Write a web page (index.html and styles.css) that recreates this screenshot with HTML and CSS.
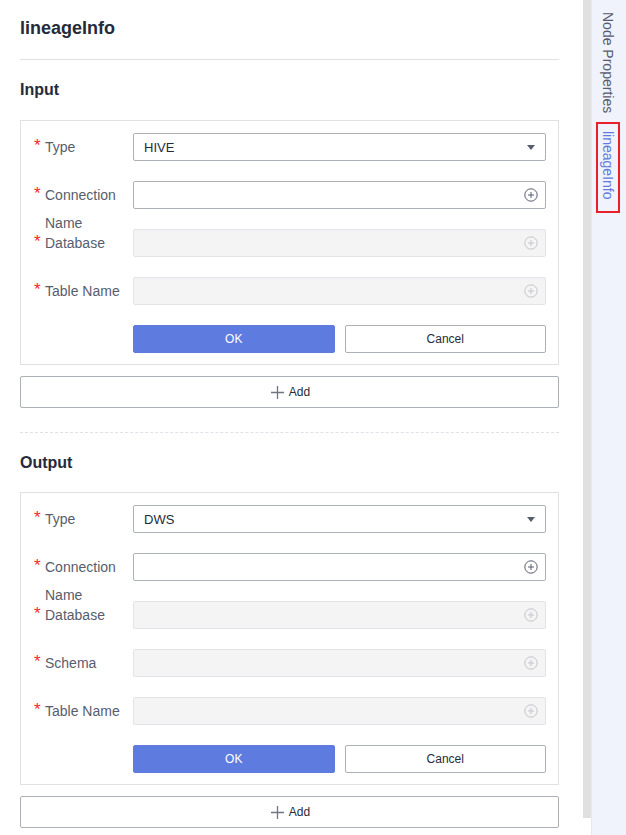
FILE: index.html
```html
<!DOCTYPE html>
<html>
<head>
<meta charset="utf-8">
<link rel="stylesheet" href="styles.css">
</head>
<body>
<div class="layout">
  <main class="content">
    <h1 class="title">lineageInfo</h1>
    <hr class="rule">

    <section class="section">
      <h2 class="section-title">Input</h2>
      <div class="card">
        <div class="row">
          <div class="label"><span class="req">*</span><span class="label-text">Type</span></div>
          <div class="field select"><span class="value">HIVE</span>
            <svg class="caret" width="8" height="5" viewBox="0 0 8 5"><path d="M0 0H8L4 5Z" fill="#575d6c"/></svg>
          </div>
        </div>
        <div class="row">
          <div class="label"><span class="req">*</span><span class="label-text">Connection Name</span></div>
          <div class="field"><svg class="plus" width="14" height="14" viewBox="0 0 14 14"><circle cx="7" cy="7" r="6.2" fill="none" stroke="#575d6c" stroke-width="1"/><path d="M7 4V10M4 7H10" stroke="#575d6c" stroke-width="1"/></svg></div>
        </div>
        <div class="row">
          <div class="label"><span class="req">*</span><span class="label-text">Database</span></div>
          <div class="field disabled"><svg class="plus" width="14" height="14" viewBox="0 0 14 14"><circle cx="7" cy="7" r="6.2" fill="none" stroke="#c2c5cc" stroke-width="1"/><path d="M7 4V10M4 7H10" stroke="#c2c5cc" stroke-width="1"/></svg></div>
        </div>
        <div class="row">
          <div class="label"><span class="req">*</span><span class="label-text">Table Name</span></div>
          <div class="field disabled"><svg class="plus" width="14" height="14" viewBox="0 0 14 14"><circle cx="7" cy="7" r="6.2" fill="none" stroke="#c2c5cc" stroke-width="1"/><path d="M7 4V10M4 7H10" stroke="#c2c5cc" stroke-width="1"/></svg></div>
        </div>
        <div class="actions">
          <button class="btn primary">OK</button>
          <button class="btn">Cancel</button>
        </div>
      </div>
      <button class="add"><svg width="13" height="13" viewBox="0 0 13 13"><path d="M6.5 0V13M0 6.5H13" stroke="#71757f" stroke-width="1.3"/></svg><span>Add</span></button>
    </section>

    <hr class="dashed">

    <section class="section out">
      <h2 class="section-title">Output</h2>
      <div class="card">
        <div class="row">
          <div class="label"><span class="req">*</span><span class="label-text">Type</span></div>
          <div class="field select"><span class="value">DWS</span>
            <svg class="caret" width="8" height="5" viewBox="0 0 8 5"><path d="M0 0H8L4 5Z" fill="#575d6c"/></svg>
          </div>
        </div>
        <div class="row">
          <div class="label"><span class="req">*</span><span class="label-text">Connection Name</span></div>
          <div class="field"><svg class="plus" width="14" height="14" viewBox="0 0 14 14"><circle cx="7" cy="7" r="6.2" fill="none" stroke="#575d6c" stroke-width="1"/><path d="M7 4V10M4 7H10" stroke="#575d6c" stroke-width="1"/></svg></div>
        </div>
        <div class="row">
          <div class="label"><span class="req">*</span><span class="label-text">Database</span></div>
          <div class="field disabled"><svg class="plus" width="14" height="14" viewBox="0 0 14 14"><circle cx="7" cy="7" r="6.2" fill="none" stroke="#c2c5cc" stroke-width="1"/><path d="M7 4V10M4 7H10" stroke="#c2c5cc" stroke-width="1"/></svg></div>
        </div>
        <div class="row">
          <div class="label"><span class="req">*</span><span class="label-text">Schema</span></div>
          <div class="field disabled"><svg class="plus" width="14" height="14" viewBox="0 0 14 14"><circle cx="7" cy="7" r="6.2" fill="none" stroke="#c2c5cc" stroke-width="1"/><path d="M7 4V10M4 7H10" stroke="#c2c5cc" stroke-width="1"/></svg></div>
        </div>
        <div class="row">
          <div class="label"><span class="req">*</span><span class="label-text">Table Name</span></div>
          <div class="field disabled"><svg class="plus" width="14" height="14" viewBox="0 0 14 14"><circle cx="7" cy="7" r="6.2" fill="none" stroke="#c2c5cc" stroke-width="1"/><path d="M7 4V10M4 7H10" stroke="#c2c5cc" stroke-width="1"/></svg></div>
        </div>
        <div class="actions">
          <button class="btn primary">OK</button>
          <button class="btn">Cancel</button>
        </div>
      </div>
      <button class="add"><svg width="13" height="13" viewBox="0 0 13 13"><path d="M6.5 0V13M0 6.5H13" stroke="#71757f" stroke-width="1.3"/></svg><span>Add</span></button>
    </section>
  </main>
  <div class="scrollbar"><div class="thumb"></div></div>
  <aside class="side">
    <div class="tab">Node Properties</div>
    <div class="tab active">lineageInfo</div>
  </aside>
</div>
</body>
</html>
```
FILE: styles.css
```css
* { box-sizing: border-box; }
html, body { margin: 0; padding: 0; }
body {
  font-family: "Liberation Sans", Arial, sans-serif;
  color: #252b3a;
  background: #fff;
  width: 626px;
  height: 835px;
  overflow: hidden;
}
.layout {
  display: flex;
  height: 835px;
}
.content {
  width: 583px;
  padding: 16px 24px 0 20px;
  overflow: hidden;
}
.title {
  margin: 0;
  font-size: 18px;
  line-height: 24px;
  font-weight: bold;
  color: #252b3a;
}
.rule {
  margin: 19px 0 0;
  border: 0;
  border-top: 1px solid #dfe1e6;
  height: 0;
}
.section { padding-top: 18px; }
.section-title {
  margin: 0;
  font-size: 16px;
  line-height: 24px;
  font-weight: bold;
  color: #252b3a;
}
.card {
  margin-top: 18px;
  border: 1px solid #dfe1e6;
  padding: 12px 12px 11px 13px;
  display: flex;
  flex-direction: column;
  gap: 20px;
}
.out .card { margin-top: 17px; }
.row {
  display: flex;
  height: 28px;
}
.label {
  width: 99px;
  flex: none;
  display: flex;
  font-size: 14px;
  line-height: 28px;
  color: #575d6c;
}
.req {
  width: 11px;
  color: #f52a2a;
  font-size: 17px;
  line-height: 25px;
}
.label-text {
  width: 80px;
  height: 28px;
  white-space: normal;
}
.field {
  flex: 1;
  height: 28px;
  border: 1px solid #adb0b8;
  border-radius: 2px;
  display: flex;
  align-items: center;
  justify-content: space-between;
  padding: 0 9px 0 10px;
  font-size: 13px;
  color: #252b3a;
}
.field .plus { margin-left: auto; margin-right: -2px; }
.field.disabled {
  background: #f4f4f4;
  border-color: #e3e4e8;
}
.caret { margin-right: 1px; }
.actions {
  display: flex;
  gap: 10px;
  padding-left: 99px;
}
.btn {
  flex: 1;
  height: 28px;
  border: 1px solid #adb0b8;
  border-radius: 2px;
  background: #fff;
  color: #252b3a;
  font-family: "Liberation Sans", Arial, sans-serif;
  font-size: 12px;
  padding: 0;
}
.btn.primary {
  background: #5e7ce0;
  border-color: #5e7ce0;
  color: #fff;
}
.add {
  margin-top: 11px;
  width: 100%;
  height: 32px;
  border: 1px solid #adb0b8;
  border-radius: 2px;
  background: #fff;
  display: flex;
  align-items: center;
  justify-content: center;
  gap: 5px;
  font-family: "Liberation Sans", Arial, sans-serif;
  font-size: 12px;
  color: #252b3a;
  padding: 0 0 0 2px;
}
.dashed {
  margin: 24px 0 0;
  border: 0;
  border-top: 1px dashed #dfe1e6;
  height: 0;
}
.scrollbar {
  width: 8px;
  flex: none;
  height: 835px;
}
.thumb {
  height: 818px;
  background: #e0e0e0;
}
.side {
  width: 35px;
  flex: none;
  background: #f0f3fc;
  border-left: 1px solid #e6e9f0;
  display: flex;
  flex-direction: column;
  align-items: flex-start;
  padding-left: 4px;
}
.tab {
  writing-mode: vertical-rl;
  font-size: 14px;
  color: #575d6c;
  line-height: 20px;
  width: 24px;
  display: flex;
  align-items: center;
}
.tab:first-child { padding: 12px 0 9px; }
.tab.active {
  color: #5e7ce0;
  border: 2px solid #e8202a;
  padding: 7px 0 12px;
  height: 91px;
}
```
